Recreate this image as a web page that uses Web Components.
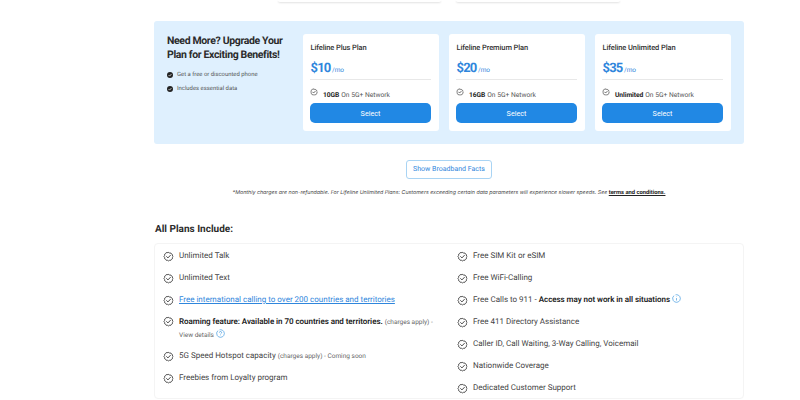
<!DOCTYPE html>
<html lang="en"><head><meta charset="utf-8"><title>Plans</title>
<style>
html,body{margin:0;padding:0;background:#fff;height:400px;overflow:hidden}
body{font-family:Roboto,"Liberation Sans",sans-serif;color:#2b2b2b;text-rendering:geometricPrecision}
</style></head><body>
<plans-page></plans-page>
<template id="icon-check"><svg width="12" height="12" viewBox="0 0 24 24" fill="none" stroke="#2f2f2f" stroke-width="2" stroke-linecap="round" stroke-linejoin="round" aria-hidden="true"><path d="M12 2.2l2.6 1.5 3-.1 1.5 2.6 2.6 1.5-.1 3L23 12l-1.4 2.3.1 3-2.6 1.5-1.5 2.6-3-.1L12 22.8l-2.4-1.5-3 .1-1.5-2.6-2.6-1.5.1-3L1 12l1.6-2.3-.1-3 2.6-1.5 1.5-2.6 3 .1z" transform="translate(1.2 1.1) scale(.9)"/><path d="M8 12.2l2.8 2.8L16 9.6"/></svg></template>
<script>
const checkSvg = s => { const n = document.getElementById('icon-check').content.firstElementChild.cloneNode(true); n.setAttribute('width', s); n.setAttribute('height', s); return n.outerHTML; };
const helpSvg = g => `<svg width="9" height="9" viewBox="0 0 20 20" fill="none" stroke="#3a96e0" stroke-width="1.5" aria-hidden="true" style="vertical-align:-1.5px"><path d="M10 1.5a8.5 8.5 0 1 1-.01 0z" stroke-dasharray="46 4"/>${g==='?'?'<path d="M7.5 8a2.5 2.5 0 1 1 3.6 2.2c-.8.4-1.1.9-1.1 1.8M10 14.2v.6"/>':'<path d="M10 9v5.5M10 5.8v.8"/>'}</svg>`;
function define(name, css, html){
  customElements.define(name, class extends HTMLElement{
    constructor(){super();const r=this.attachShadow({mode:'open'});r.innerHTML=`<style>${css}</style>${typeof html==='function'?html(this):html}`;}
  });
}
define('plan-card',`
:host{display:flex;flex-direction:column;width:136px;height:97px;box-sizing:border-box;background:#fff;border-radius:3px;padding:7px;padding-right:8px}
.name{font-size:7.5px;font-weight:500;line-height:12px;margin:1px 0 5px .5px;color:#333;letter-spacing:-.1px}
.price{display:flex;align-items:baseline;color:#2f86dc;border-bottom:1px solid #e8e8e8;padding-bottom:3px;line-height:20px;height:17px;margin:0 0 7px}
.price b{font-size:13px;font-weight:700;letter-spacing:-.8px;margin-left:.5px}
.price span{font-size:6.5px;margin-left:1.5px}
.feat{display:flex;align-items:center;font-size:6.7px;color:#555;height:14px;margin-bottom:2px;padding-top:1px;box-sizing:border-box}
.feat svg{margin:-5px 5px 0 0}
.feat b{color:#222;margin-right:2px;font-weight:700;letter-spacing:-.08px}
button{display:block;width:100%;height:20px;border:0;border-radius:5px;background:#2188e4;color:#fff;font:400 7.2px Roboto,sans-serif;padding:0}
`,el=>`<div class="name">${el.getAttribute('name')}</div>
<div class="price"><b>${el.getAttribute('price')}</b><span>/mo</span></div>
<div class="feat">${checkSvg(8)}<b>${el.getAttribute('data')}</b>On 5G+ Network</div>
<button>Select</button>`);
define('upgrade-panel',`
:host{display:flex;background:#dff0fe;border-radius:3px;width:590px;height:123px;box-sizing:border-box;padding:13px}
.left{flex:0 0 136px}
h2{margin:0 0 6px;font-size:10.5px;line-height:14px;font-weight:700;color:#2b2b2b;white-space:nowrap;letter-spacing:-.36px}
ul{list-style:none;margin:0;padding:0}
li{display:flex;align-items:center;gap:4px;font-size:5.9px;color:#555;height:14px}
li svg{flex:none}
.cards{display:flex;gap:10px}
`,`<div class="left"><h2>Need More? Upgrade Your<br>Plan for Exciting Benefits!</h2>
<ul><li><svg width="6" height="6" viewBox="0 0 12 12"><circle cx="6" cy="6" r="6" fill="#222"/><path d="M3.2 6.2l2 2 3.6-4" stroke="#fff" stroke-width="1.4" fill="none"/></svg><span>Get a free or discounted phone</span></li>
<li><svg width="6" height="6" viewBox="0 0 12 12"><circle cx="6" cy="6" r="6" fill="#222"/><path d="M3.2 6.2l2 2 3.6-4" stroke="#fff" stroke-width="1.4" fill="none"/></svg><span>Includes essential data</span></li></ul></div>
<div class="cards"><slot></slot></div>`);
define('include-item',`
:host{display:flex;align-items:center;gap:5px;min-height:22px;font-size:8px;color:#444;box-sizing:border-box}
:host([tall]){align-items:flex-start;min-height:34px;padding-top:5px}
svg{flex:none}
.t{line-height:12.5px}
::slotted(a){color:#2f86dc}
::slotted(b){color:#222;font-weight:600;letter-spacing:-.05px}
::slotted(small){font-size:6.5px;color:#666}
`,el=>`${checkSvg(11)}<span class="t"><slot></slot></span>`);
define('include-list',`:host{width:590px;height:156px;box-sizing:border-box;border:1px solid #f4f4f4;border-radius:4px;padding:1px 8px 0;display:grid;grid-template-columns:294px 1fr;overflow:hidden}
.c{display:flex;flex-direction:column}`,`<div class="c"><slot name="a"></slot></div><div class="c"><slot name="b"></slot></div>`);
define('plans-page',`
:host{display:block;width:590px;margin-left:154px}
.top{display:flex;height:21px;margin-left:124px;gap:15px}
.top i{display:block;height:1.5px;background:#fff;box-shadow:0 1px 2px rgba(0,0,0,.12);border-radius:0 0 3px 3px}
.facts{display:flex;justify-content:center;margin-top:16px}
.facts a{display:block;border:1px solid #a9d4f4;border-radius:3px;color:#2f86dc;font-size:7px;font-weight:400;height:17px;line-height:17px;padding:0 6px}
.note{text-align:center;font:italic 5.3px/8px Inter,"Liberation Sans",sans-serif;color:#444;margin-top:10px;height:8px;white-space:nowrap}
.note b{font-style:normal;font-weight:700;color:#222;text-decoration:underline;font-family:Roboto,sans-serif;font-size:5.8px}
h3{margin:26px 0 6px 1px;font-size:10px;line-height:14px;font-weight:700;color:#2b2b2b}
`,`<div class="top"><i style="width:163px"></i><i style="width:164px"></i></div>
<slot name="panel"></slot>
<div class="facts"><a>Show Broadband Facts</a></div>
<div class="note">*Monthly charges are non-refundable. For Lifeline Unlimited Plans: Customers exceeding certain data parameters will experience slower speeds. See <b>terms and conditions.</b></div>
<h3>All Plans Include:</h3>
<slot name="list"></slot>`);
const page=document.querySelector('plans-page');
page.innerHTML=`
<upgrade-panel slot="panel">
<plan-card name="Lifeline Plus Plan" price="$10" data="10GB"></plan-card>
<plan-card name="Lifeline Premium Plan" price="$20" data="16GB"></plan-card>
<plan-card name="Lifeline Unlimited Plan" price="$35" data="Unlimited"></plan-card>
</upgrade-panel>
<include-list slot="list">
<include-item slot="a">Unlimited Talk</include-item>
<include-item slot="a">Unlimited Text</include-item>
<include-item slot="a"><a href="#">Free international calling to over 200 countries and territories</a></include-item>
<include-item slot="a" tall><b>Roaming feature: Available in 70 countries and territories.</b> <small>(charges apply) -<br>View details</small> ${helpSvg('?')}</include-item>
<include-item slot="a">5G Speed Hotspot capacity&nbsp;<small>(charges apply) - Coming soon</small></include-item>
<include-item slot="a">Freebies from Loyalty program</include-item>
<include-item slot="b">Free SIM Kit or eSIM</include-item>
<include-item slot="b">Free WiFi-Calling</include-item>
<include-item slot="b">Free Calls to 911 -&nbsp;<b>Access may not work in all situations</b> ${helpSvg('i')}</include-item>
<include-item slot="b">Free 411 Directory Assistance</include-item>
<include-item slot="b">Caller ID, Call Waiting, 3-Way Calling, Voicemail</include-item>
<include-item slot="b">Nationwide Coverage</include-item>
<include-item slot="b">Dedicated Customer Support</include-item>
</include-list>`;
</script>
</body></html>
